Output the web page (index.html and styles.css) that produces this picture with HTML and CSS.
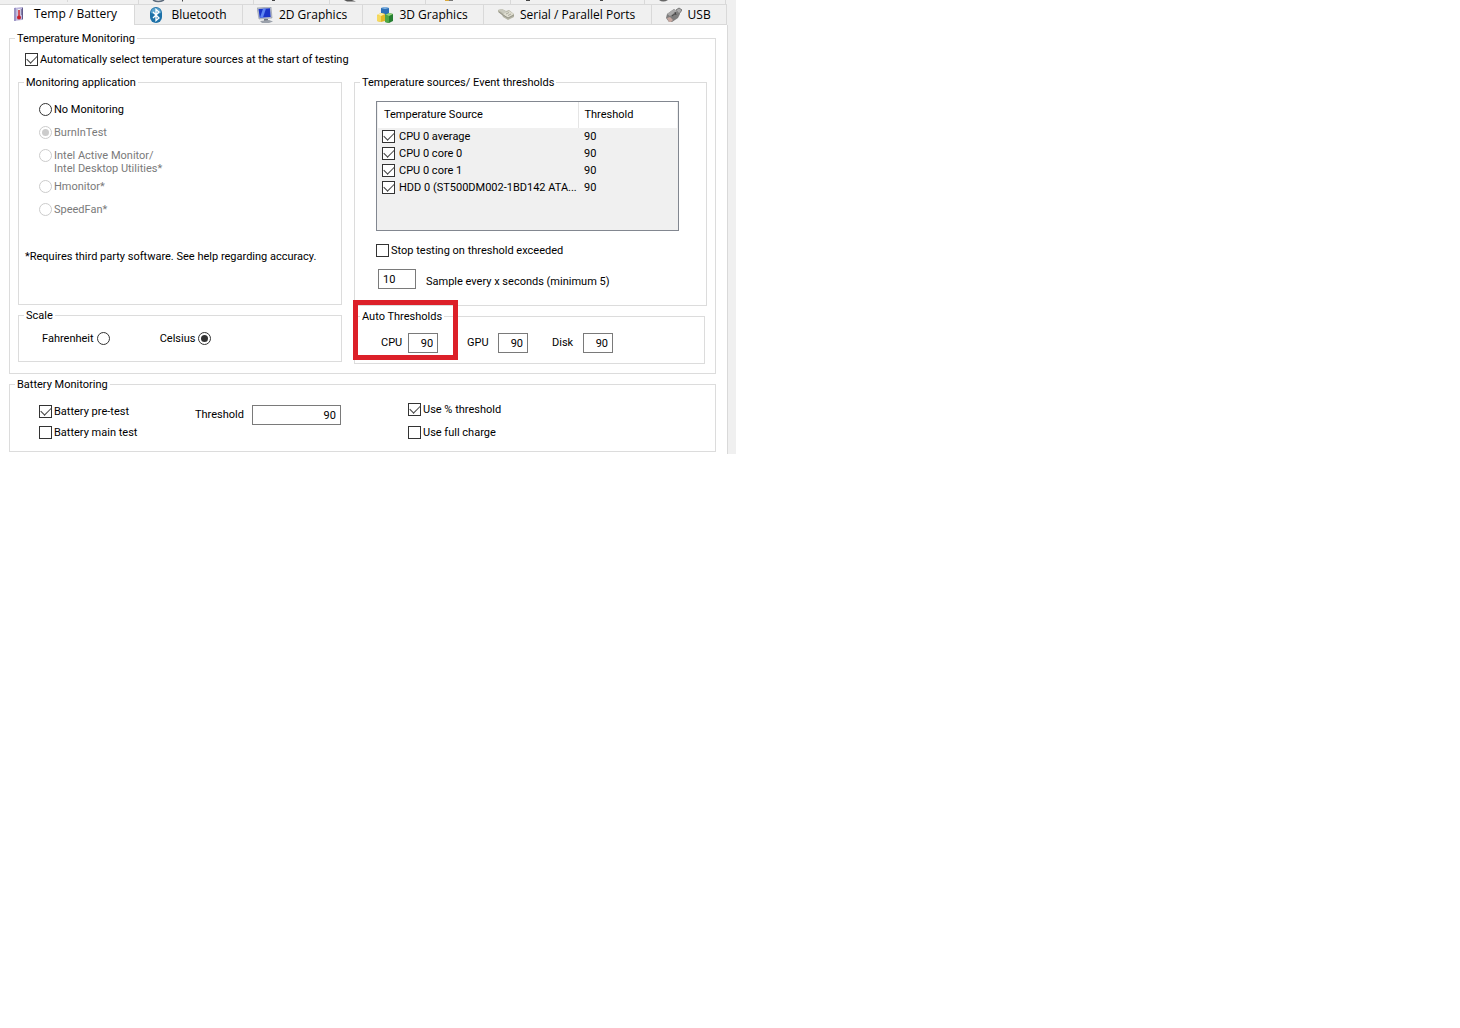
FILE: index.html
```html
<!DOCTYPE html>
<html lang="en">
<head>
    <meta charset="UTF-8">
    <meta name="viewport" content="width=device-width, initial-scale=1.0">
    <title>Test Preferences</title>
    <link rel="stylesheet" href="styles.css">
</head>
<body>
    <div class="window">
        <!-- Bottom edge of the tab row behind -->
        <svg class="back-tabs" width="728" height="4" viewBox="0 0 728 4" aria-hidden="true">
            <path d="M67.5 0v2M138.5 0v4M253.5 0v4M329.5 0v4M425.5 0v4M510.5 0v4M644.5 0v4M725.5 0v4" stroke="#d9d9d9"/>
            <path d="M153 0q5 3 11 0" fill="none" stroke="#5d6b7c" stroke-width="1.5"/>
            <path d="M182.5 0v1.5M272 .5h3M526 .5h4M603 .5h-3" stroke="#444"/>
            <path d="M344 0h8l4 1.5h-9z" fill="#555"/>
            <path d="M445 0h4v1h-4z" fill="#d8a83c"/>
            <path d="M449 0h4v1h-4z" fill="#777"/>
            <path d="M659 0q4 3 9 0z" fill="#666"/>
        </svg>

        <nav class="tabs">
            <button class="tab active">
                <svg width="16" height="16" viewBox="0 0 16 16">
                    <path d="M2 2l8-1v13l-8 1z" fill="#bdb6dc"/>
                    <path d="M2 2l2-.3v13l-2 .3z" fill="#9a93c4"/>
                    <path d="M10 1l1 1v11l-1 1z" fill="#615a8c"/>
                    <path d="M7 3v7" stroke="#eee" stroke-width="2.5"/>
                    <path d="M7 4v7" stroke="#c8202c" stroke-width="1.5"/>
                    <circle cx="7" cy="11.5" r="2" fill="#c8202c"/>
                    <path d="M9 4h1M9 6h1M9 8h1" stroke="#4c4673"/>
                </svg>
                Temp / Battery
            </button>
            <button class="tab">
                <svg width="16" height="16" viewBox="0 0 16 16">
                    <rect x="1" y="0" width="12" height="16" rx="6" fill="#1d71a8"/>
                    <path d="M2 6q0-5 5-5t5 5q-5 2-10 0z" fill="#5ba4cf"/>
                    <path d="M4 5l6 6-3 2.5v-11l3 2.5-6 6" fill="none" stroke="#fff" stroke-width="1.3"/>
                </svg>
                Bluetooth
            </button>
            <button class="tab">
                <svg width="16" height="16" viewBox="0 0 16 16">
                    <path d="M0 1l14-1 1 11-13 1z" fill="#bfc5cf" stroke="#7f8794" stroke-width=".5"/>
                    <path d="M1.5 2l11.5-.8.7 8.800-11 .8z" fill="#1b35c8"/>
                    <path d="M6 1.700l3-.2L6 10.400l-3 .2z" fill="#5e86f2"/>
                    <path d="M7 12h4v2H7z" fill="#727883"/>
                    <path d="M3 14l9-1 4 1.500-4 1.500H5z" fill="#9ba1ab"/>
                </svg>
                2D Graphics
            </button>
            <button class="tab">
                <svg width="16" height="16" viewBox="0 0 16 16">
                    <path d="M4 1l4-1 4 1v6l-4 2-4-1z" fill="#2d70b7"/>
                    <path d="M4 1l4-1 4 1-4 1z" fill="#8ab8e4"/>
                    <path d="M0 8l4-2 4 1v7l-4 1-4-1z" fill="#e3b828"/>
                    <path d="M0 8l4-2 4 1-4 2z" fill="#fff0a0"/>
                    <path d="M0 8l4 1v6l-4-1z" fill="#f5d95f"/>
                    <path d="M8 8l4-2 4 1v7l-4 2-4-1z" fill="#267f32"/>
                    <path d="M8 8l4-2 4 1-4 2z" fill="#98d77f"/>
                    <path d="M8 8l4 1v7l-4-1z" fill="#4ea747"/>
                </svg>
                3D Graphics
            </button>
            <button class="tab">
                <svg width="16" height="16" viewBox="0 0 16 16">
                    <path d="M0 3l4-1 4 2 3-1 5 4v3l-6 3-5-3-1-2-4-3z" fill="#b5b4a5"/>
                    <path d="M0 3l4-1 5 3-3 2z" fill="#c9c9bd"/>
                    <path d="M5 7l6-3 5 3-6 4z" fill="#deddd0"/>
                    <path d="M5 8l5 3 6-3M1 5l4 3" fill="none" stroke="#96968a"/>
                    <path d="M8 7l3-1.500M10 8.500l3-1.500" stroke="#aaa99c"/>
                </svg>
                Serial / Parallel Ports
            </button>
            <button class="tab">
                <svg width="16" height="16" viewBox="0 0 16 16">
                    <path d="M10 3l3-2 3 2-3 4z" fill="#aaa" stroke="#777"/>
                    <path d="M1 7l7-5 6 5-2 4-6 4H3l-3-4z" fill="#7d7d7d"/>
                    <path d="M1 7l7-5 3 2-7 5z" fill="#a9a9a9"/>
                    <path d="M1 11l3-1 3 3-2 2H3z" fill="#c5a8a0"/>
                    <path d="M6 9l4-3M9 5l1 3" stroke="#444"/>
                </svg>
                USB
            </button>
        </nav>

        <main class="panel">
            <fieldset class="group">
                <legend>Temperature Monitoring</legend>
                <div class="temperature">
                    <label class="option auto-select"><input type="checkbox" checked>Automatically select temperature sources at the start of testing</label>

                    <div class="columns">
                        <div class="column">
                            <fieldset class="group">
                                <legend>Monitoring application</legend>
                                <div class="application">
                                    <div class="radio-list">
                                        <label class="option"><input type="radio" name="app">No Monitoring</label>
                                        <label class="option disabled"><input type="radio" name="app" checked disabled>BurnInTest</label>
                                        <label class="option disabled two-line"><input type="radio" name="app" disabled><span>Intel Active Monitor/<br>Intel Desktop Utilities*</span></label>
                                        <label class="option disabled"><input type="radio" name="app" disabled>Hmonitor*</label>
                                        <label class="option disabled"><input type="radio" name="app" disabled>SpeedFan*</label>
                                    </div>
                                    <p class="note">*Requires third party software. See help regarding accuracy.</p>
                                </div>
                            </fieldset>

                            <fieldset class="group">
                                <legend>Scale</legend>
                                <div class="scale">
                                    <label class="option">Fahrenheit<input type="radio" name="scale"></label>
                                    <label class="option">Celsius<input type="radio" name="scale" checked></label>
                                </div>
                            </fieldset>
                        </div>

                        <div class="column">
                            <fieldset class="group">
                                <legend>Temperature sources/ Event thresholds</legend>
                                <div class="sources">
                                    <div class="source-list">
                                        <table>
                                            <thead>
                                                <tr><th>Temperature Source</th><th>Threshold</th></tr>
                                            </thead>
                                            <tbody>
                                                <tr><td><label class="option"><input type="checkbox" checked>CPU 0 average</label></td><td>90</td></tr>
                                                <tr><td><label class="option"><input type="checkbox" checked>CPU 0 core 0</label></td><td>90</td></tr>
                                                <tr><td><label class="option"><input type="checkbox" checked>CPU 0 core 1</label></td><td>90</td></tr>
                                                <tr><td><label class="option"><input type="checkbox" checked>HDD 0 (ST500DM002-1BD142 ATA...</label></td><td>90</td></tr>
                                            </tbody>
                                        </table>
                                    </div>
                                    <label class="option"><input type="checkbox">Stop testing on threshold exceeded</label>
                                    <div class="sample">
                                        <input type="text" id="sample" value="10">
                                        <label for="sample">Sample every x seconds (minimum 5)</label>
                                    </div>
                                </div>
                            </fieldset>

                            <fieldset class="group auto">
                                <legend>Auto Thresholds</legend>
                                <div class="auto-row">
                                    <label>CPU<input type="text" class="number" value="90"></label>
                                    <label>GPU<input type="text" class="number" value="90"></label>
                                    <label>Disk<input type="text" class="number" value="90"></label>
                                </div>
                                <div class="highlight"></div>
                            </fieldset>
                        </div>
                    </div>
                </div>
            </fieldset>

            <fieldset class="group battery">
                <legend>Battery Monitoring</legend>
                <div class="battery-grid">
                    <div class="checks pretest">
                        <label class="option"><input type="checkbox" checked>Battery pre-test</label>
                        <label class="option"><input type="checkbox">Battery main test</label>
                    </div>
                    <label class="threshold">Threshold<input type="text" class="number" value="90"></label>
                    <div class="checks">
                        <label class="option"><input type="checkbox" checked>Use % threshold</label>
                        <label class="option"><input type="checkbox">Use full charge</label>
                    </div>
                </div>
            </fieldset>
        </main>
    </div>
</body>
</html>
```

FILE: styles.css
```css
* {
    box-sizing: border-box;
}

body {
    margin: 0;
    background-color: #fff;
    color: #000;
    font: 11px/14px Roboto, sans-serif;
}

.window {
    max-width: 736px;
    background-color: #f0f0f0;
}

/* Tabs */
.back-tabs {
    display: block;
}

.tabs {
    display: flex;
    height: 21px;
    padding-right: 9px;
}

.tab {
    display: flex;
    align-items: center;
    gap: 6px;
    flex: 1 1 auto;
    padding: 0 14px;
    border: 1px solid #d9d9d9;
    border-left: 0;
    background-color: #f0f0f0;
    color: #000;
    font: 12px/16px "Open Sans", sans-serif;
    white-space: nowrap;
}

.tab svg {
    flex: none;
}

.tab.active {
    padding: 0 16px 3px 12px;
    border-bottom: 0;
    background-color: #fff;
}

/* Page */
.panel {
    margin-right: 8px;
    padding: 6px 11px 2px 9px;
    border-right: 1px solid #d9d9d9;
    background-color: #fff;
}

.group {
    min-width: 0;
    margin: 0;
    padding: 0;
    border: 1px solid #dcdcdc;
}

legend {
    margin-left: 5px;
    padding: 1px 2px 0;
}

.option {
    display: flex;
    align-items: center;
    gap: 2px;
    line-height: 13px;
    white-space: nowrap;
}

.option.disabled {
    color: #7a7a7a;
}

/* Tick boxes and radio buttons */
input[type="checkbox"],
input[type="radio"] {
    display: grid;
    place-content: center;
    flex: none;
    appearance: none;
    width: 13px;
    height: 13px;
    margin: 0;
    border: 1px solid #333;
    background-color: #fff;
}

input[type="radio"] {
    border-radius: 50%;
}

input[type="checkbox"]:checked::before {
    content: "";
    width: 9px;
    height: 5px;
    border: solid #444;
    border-width: 0 0 1px 1px;
    transform: translateY(-2px) rotate(-45deg);
}

input[type="radio"]:checked::before {
    content: "";
    width: 7px;
    height: 7px;
    border-radius: 50%;
    background-color: #333;
}

input[type="radio"]:disabled {
    border-color: #ccc;
}

input[type="radio"]:disabled::before {
    background-color: #ccc;
}

input[type="text"] {
    width: 38px;
    height: 20px;
    padding: 0 4px;
    border: 1px solid #7a7a7a;
    background-color: #fff;
    color: #000;
    font: inherit;
}

input.number {
    width: 30px;
    text-align: right;
}

/* Temperature monitoring */
.temperature {
    padding: 7px 8px 9px;
}

.auto-select {
    margin-left: 7px;
}

.columns {
    display: grid;
    grid-template-columns: 324fr 353fr;
    gap: 12px;
    margin-top: 9px;
}

.column {
    display: flex;
    flex-direction: column;
    gap: 3px;
}

.application {
    padding: 13px 6px 40px;
}

.radio-list {
    display: flex;
    flex-direction: column;
    align-items: flex-start;
    gap: 10px;
    padding-left: 14px;
}

.two-line {
    align-items: flex-start;
    margin-bottom: -5px;
}

.note {
    margin: 34px 0 0;
}

.scale {
    display: flex;
    gap: 50px;
    padding: 9px 23px 16px;
}

.scale .option {
    gap: 3px;
}

.sources {
    padding: 11px 27px 16px 21px;
}

.source-list {
    height: 130px;
    margin-bottom: 13px;
    padding: 0 1px;
    border: 1px solid #828790;
    background-color: #f0f0f0;
}

table {
    width: 100%;
    border-collapse: collapse;
    table-layout: fixed;
}

th {
    height: 26px;
    padding: 0 6px;
    background-color: #fff;
    font-weight: normal;
    text-align: left;
}

th:first-child {
    width: 200px;
    border-right: 1px solid #e5e5e5;
}

td {
    height: 17px;
    padding: 0 6px;
}

td:first-child {
    padding: 0 0 0 4px;
}

td .option {
    gap: 4px;
}

.sample {
    display: flex;
    align-items: flex-end;
    gap: 10px;
    margin: 12px 0 0 2px;
}

.auto {
    position: relative;
    margin-right: 2px;
}

.auto-row {
    display: grid;
    grid-template-columns: 62px 61px 61px;
    gap: 24px;
    padding: 9px 26px 10px;
}

.auto-row label {
    display: flex;
    align-items: center;
    justify-content: space-between;
}

.auto-row label:first-child {
    justify-content: flex-start;
    gap: 6px;
}

/* Red frame around the CPU threshold */
.highlight {
    position: absolute;
    top: -24px;
    left: -2px;
    width: 105px;
    height: 60px;
    border: 5px solid #dc2029;
    pointer-events: none;
}

/* Battery monitoring */
.battery {
    margin-top: 3px;
}

.battery-grid {
    display: grid;
    grid-template-columns: 156fr 213fr 278fr;
    padding: 11px 29px 12px;
}

.checks {
    display: flex;
    flex-direction: column;
    gap: 10px;
}

.pretest {
    gap: 8px;
    padding-top: 2px;
}

.threshold {
    display: flex;
    align-items: center;
    gap: 8px;
    height: 24px;
}

.threshold input.number {
    width: 89px;
}
```
